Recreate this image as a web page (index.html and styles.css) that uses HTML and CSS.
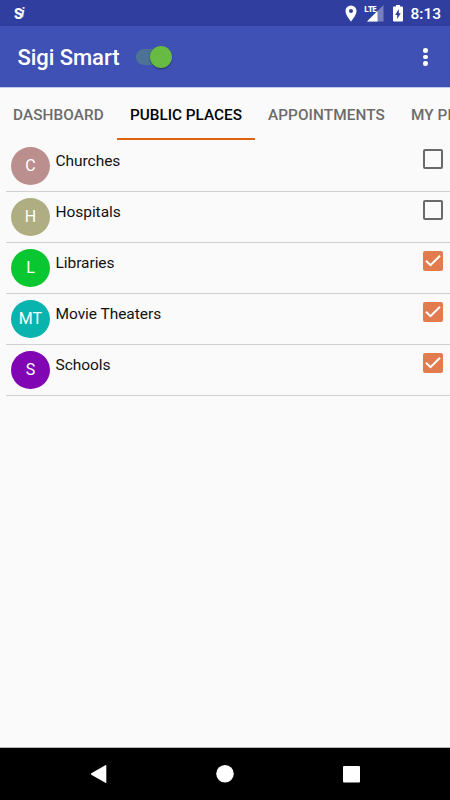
FILE: index.html
```html
<!DOCTYPE html>
<html lang="en">

<head>
    <meta charset="UTF-8">
    <meta name="viewport" content="width=device-width, initial-scale=1.0">
    <title>Sigi Smart</title>
    <link rel="stylesheet" href="styles.css">
</head>

<body>
    <div class="status-bar">
        <span class="app-mark"><b>S</b><i>i</i></span>
        <div class="status-icons">
            <svg class="icon-location" width="12" height="17" viewBox="0 0 12 17">
                <path fill="#fff" fill-rule="evenodd" d="M6 .5A5.500 5.500 0 0 0 .5 6c0 4.200 5.500 10.500 5.500 10.500S11.500 10.200 11.500 6A5.500 5.500 0 0 0 6 .5zm0 3.500a2 2 0 1 1 0 4 2 2 0 0 1 0-4z"/>
            </svg>
            <div class="signal">
                <span class="lte">LTE</span>
                <svg width="17" height="17" viewBox="0 0 17 17">
                    <path fill="#7680bf" d="M16.500 0v16.500H0z"/>
                    <path fill="#fff" d="M10.500 6v10.500H0z"/>
                </svg>
            </div>
            <svg class="icon-battery" width="10" height="17" viewBox="0 0 10 17">
                <path fill="#fff" d="M3 0h4v1.600h2q1 0 1 1v12.900q0 1-1 1H1q-1 0-1-1V2.600q0-1 1-1h2z"/>
                <path fill="#303f9f" d="M5.800 4v4.200h2L4.200 14V9.900H2.200z"/>
            </svg>
            <span class="clock">8:13</span>
        </div>
    </div>

    <header class="toolbar">
        <h1>Sigi Smart</h1>
        <div class="switch">
            <div class="switch-thumb"></div>
        </div>
        <div class="menu-dots">
            <span></span>
            <span></span>
            <span></span>
        </div>
    </header>

    <nav class="tabs">
        <a class="tab tab-dashboard">DASHBOARD</a>
        <a class="tab tab-places active">PUBLIC PLACES</a>
        <a class="tab tab-appointments">APPOINTMENTS</a>
        <a class="tab">MY PLACES</a>
    </nav>

    <ul class="place-list">
        <li class="place">
            <span class="avatar rose">C</span>
            <span class="place-name">Churches</span>
            <span class="checkbox"></span>
        </li>
        <li class="place">
            <span class="avatar olive">H</span>
            <span class="place-name">Hospitals</span>
            <span class="checkbox"></span>
        </li>
        <li class="place">
            <span class="avatar green">L</span>
            <span class="place-name">Libraries</span>
            <span class="checkbox checked">
                <svg width="20" height="20" viewBox="0 0 20 20"><path d="M3 9.700l4.500 4.500 9.500-9.500"/></svg>
            </span>
        </li>
        <li class="place">
            <span class="avatar teal">MT</span>
            <span class="place-name">Movie Theaters</span>
            <span class="checkbox checked">
                <svg width="20" height="20" viewBox="0 0 20 20"><path d="M3 9.700l4.500 4.500 9.500-9.500"/></svg>
            </span>
        </li>
        <li class="place">
            <span class="avatar purple">S</span>
            <span class="place-name">Schools</span>
            <span class="checkbox checked">
                <svg width="20" height="20" viewBox="0 0 20 20"><path d="M3 9.700l4.500 4.500 9.500-9.500"/></svg>
            </span>
        </li>
    </ul>

    <footer class="nav-bar">
        <svg width="18" height="20" viewBox="0 0 18 20">
            <path fill="#fff" d="M1.300 9.300L15.300 1.200q1-.5 1 .5v16.600q0 1-1 .5L1.300 10.700q-1-.7 0-1.400z"/>
        </svg>
        <svg width="18" height="18" viewBox="0 0 18 18">
            <circle cx="8" cy="8.700" r="8.800" fill="#fff"/>
        </svg>
        <svg width="17" height="17" viewBox="0 0 17 17">
            <rect width="17" height="16.500" rx="1" fill="#fff"/>
        </svg>
    </footer>
</body>

</html>
```

FILE: styles.css
```css
* {
    margin: 0;
    padding: 0;
    box-sizing: border-box;
}

body {
    font-family: Roboto, sans-serif;
    background: #fafafa;
    width: 450px;
    height: 800px;
    overflow: hidden;
    display: flex;
    flex-direction: column;
}

svg {
    display: block;
    overflow: visible;
}

/* Status bar */
.status-bar {
    flex: none;
    height: 26px;
    background: #303f9f;
    color: #fff;
    display: flex;
    justify-content: space-between;
    padding: 0 9px 0 14px;
}

.app-mark {
    display: flex;
    align-items: flex-start;
    padding-top: 6px;
    font-size: 14px;
    line-height: 17px;
}

.app-mark b {
    width: 7px;
    font-weight: 900;
}

.app-mark i {
    font-size: 13px;
    line-height: 14px;
    font-weight: 700;
}

.status-icons {
    display: flex;
    align-items: flex-start;
    padding-top: 5px;
}

.icon-location {
    margin-right: 7px;
}

.signal {
    display: flex;
    margin-right: 9px;
}

.lte {
    width: 3px;
    margin-top: -1px;
    font-family: "Open Sans", sans-serif;
    font-size: 8.5px;
    line-height: 10px;
    font-weight: 700;
    letter-spacing: -0.8px;
    white-space: nowrap;
}

.icon-battery {
    margin-right: 7.500px;
}

.clock {
    font-size: 15.500px;
    line-height: 18px;
    font-weight: 500;
}

/* Toolbar */
.toolbar {
    flex: none;
    height: 62px;
    background: #3f51b5;
    color: #fff;
    display: flex;
    align-items: center;
    padding: 1px 22px 0 17px;
    border-bottom: 1px solid #c3c9e7;
}

.toolbar h1 {
    width: 118.500px;
    padding: 1px 0 0 0.500px;
    font-size: 22px;
    font-weight: 500;
    letter-spacing: -0.05px;
    white-space: nowrap;
}

.switch {
    width: 36px;
    height: 16px;
    border-radius: 8px;
    background: #4c7395;
    display: flex;
    align-items: center;
    justify-content: flex-end;
}

.switch-thumb {
    width: 22px;
    height: 22px;
    flex: none;
    border-radius: 50%;
    background: #67bb43;
    box-shadow: 0 1px 2px rgba(0, 0, 0, 0.4);
}

.menu-dots {
    margin-left: auto;
    display: flex;
    flex-direction: column;
    gap: 2px;
}

.menu-dots span {
    width: 4.600px;
    height: 4.600px;
    border-radius: 50%;
    background: #fff;
}

/* Tabs */
.tabs {
    flex: none;
    height: 52px;
    display: flex;
    overflow: hidden;
}

.tab {
    flex: none;
    padding: 0 13px;
    font-size: 15.300px;
    line-height: 54px;
    font-weight: 500;
    letter-spacing: 0.1px;
    color: #6b6b6b;
    white-space: nowrap;
}

.tab-dashboard {
    width: 117px;
}

.tab-places {
    width: 138px;
    letter-spacing: 0;
}

.tab-appointments {
    width: 143px;
}

.tab.active {
    color: #000;
    border-bottom: 2px solid #e0620d;
}

/* Places */
.place-list {
    flex: 1;
    list-style: none;
    padding: 1px 0 0 6px;
}

.place {
    height: 51px;
    display: flex;
    align-items: flex-start;
    padding: 6px 7.500px 0 5px;
    border-bottom: 1px solid #d0d0d0;
}

.avatar {
    width: 39px;
    height: 38px;
    border-radius: 50%;
    color: #fff;
    font-size: 16px;
    line-height: 37px;
    text-align: center;
}

.rose {
    background: #bc8f8f;
}

.olive {
    background: #aeae82;
}

.green {
    background: #09c730;
}

.teal {
    background: #09b3ae;
}

.purple {
    background: #8205b4;
}

.place-name {
    margin: 5px 0 0 5.500px;
    font-size: 15.500px;
    line-height: 18px;
    letter-spacing: -0.05px;
    color: #111;
}

.checkbox {
    width: 20px;
    height: 20px;
    margin: 2px 0 0 auto;
    border: 2px solid #696969;
    border-radius: 2px;
}

.checkbox.checked {
    border: none;
    background: #e27b4d;
}

.checkbox path {
    fill: none;
    stroke: #fff;
    stroke-width: 2;
}

/* Navigation bar */
.nav-bar {
    flex: none;
    height: 53px;
    background: #000;
    border-top: 1px solid #b5b5b5;
    display: flex;
    align-items: center;
    justify-content: space-between;
    padding: 0 90px;
}
```
